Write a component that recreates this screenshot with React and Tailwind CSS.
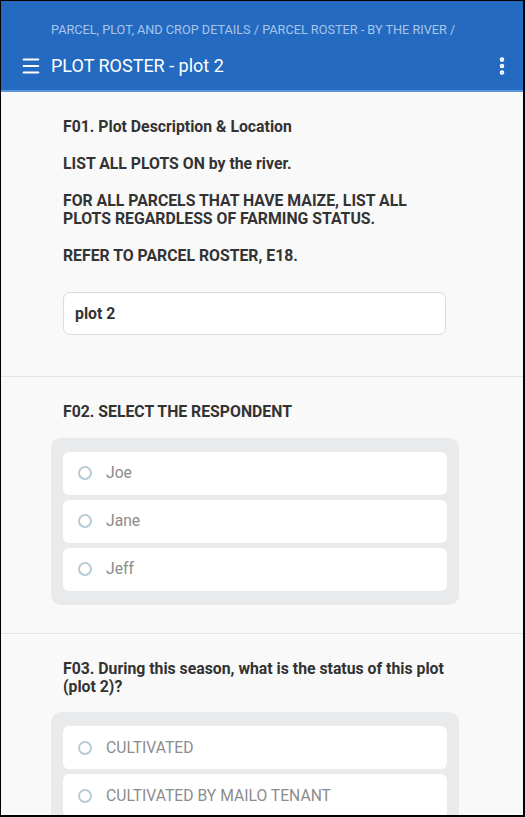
import { Menu, MoreVertical } from 'lucide-react';

const respondents = ['Joe', 'Jane', 'Jeff'];
const statuses = ['CULTIVATED', 'CULTIVATED BY MAILO TENANT', 'RENTED OUT', 'FALLOW'];

const RadioOption = ({ label }) => (
  <div className="flex items-center h-[43px] bg-white rounded-[6px] pl-[15px]">
    <span className="w-[14px] h-[14px] rounded-full border-2 border-[#b8cbd6] shrink-0" />
    <span className="ml-[14px] text-[15.7px] text-[#8c8c8c]">{label}</span>
  </div>
);

const OptionGroup = ({ items }) => (
  <div className="bg-[#e9eaeb] rounded-[10px] px-[12px] py-[14px] flex flex-col gap-[5px]">
    {items.map((item) => (
      <RadioOption key={item} label={item} />
    ))}
  </div>
);

export default function App() {
  return (
    <div
      className="w-[525px] h-[817px] overflow-hidden border-l border-t border-r-2 border-b-2 border-black bg-[#f9f9f9] flex flex-col"
      style={{ fontFamily: 'Roboto, "Liberation Sans", sans-serif' }}
    >
      {/* Header */}
      <header className="bg-[#246ac0] h-[91px] border-b-2 border-[#5c95da] shrink-0 flex flex-col">
        <div className="pl-[50px] pt-[21px] text-[12.7px] text-[#a8c5ec] leading-[16px] whitespace-nowrap">
          PARCEL, PLOT, AND CROP DETAILS / PARCEL ROSTER - BY THE RIVER /
        </div>
        <div className="flex items-center mt-[16px] h-[24px]">
          <Menu className="ml-[19px] text-white" size={22} strokeWidth={2.2} />
          <span className="ml-[9px] text-[18px] text-white leading-[24px]">PLOT ROSTER - plot 2</span>
          <MoreVertical className="ml-auto mr-[10px] text-white" size={22} strokeWidth={3} />
        </div>
      </header>

      {/* F01 */}
      <section className="pl-[62px] pr-[77px] pt-[26px] pb-[41px] border-b border-[#e3e3e3] text-[#333] font-bold text-[15.8px] leading-[18.4px]">
        <p className="mb-[18.4px]">F01. Plot Description &amp; Location</p>
        <p className="mb-[18.4px]">LIST ALL PLOTS ON by the river.</p>
        <p className="mb-[18.4px]">FOR ALL PARCELS THAT HAVE MAIZE, LIST ALL PLOTS REGARDLESS OF FARMING STATUS.</p>
        <p className="mb-[27px]">REFER TO PARCEL ROSTER, E18.</p>
        <div className="h-[43px] bg-white border border-[#dcdcdc] rounded-[7px] flex items-center px-[11px]">
          plot 2
        </div>
      </section>

      {/* F02 */}
      <section className="pl-[50px] pr-[64px] pt-[26px] pb-[28px] border-b border-[#e3e3e3]">
        <p className="pl-[12px] mb-[16px] text-[#333] font-bold text-[15.8px] leading-[18.4px]">F02. SELECT THE RESPONDENT</p>
        <OptionGroup items={respondents} />
      </section>

      {/* F03 */}
      <section className="pl-[50px] pr-[64px] pt-[26px]">
        <p className="pl-[12px] pr-[8px] mb-[16px] text-[#333] font-bold text-[15.8px] leading-[18.4px]">
          F03. During this season, what is the status of this plot (plot 2)?
        </p>
        <OptionGroup items={statuses} />
      </section>
    </div>
  );
}
